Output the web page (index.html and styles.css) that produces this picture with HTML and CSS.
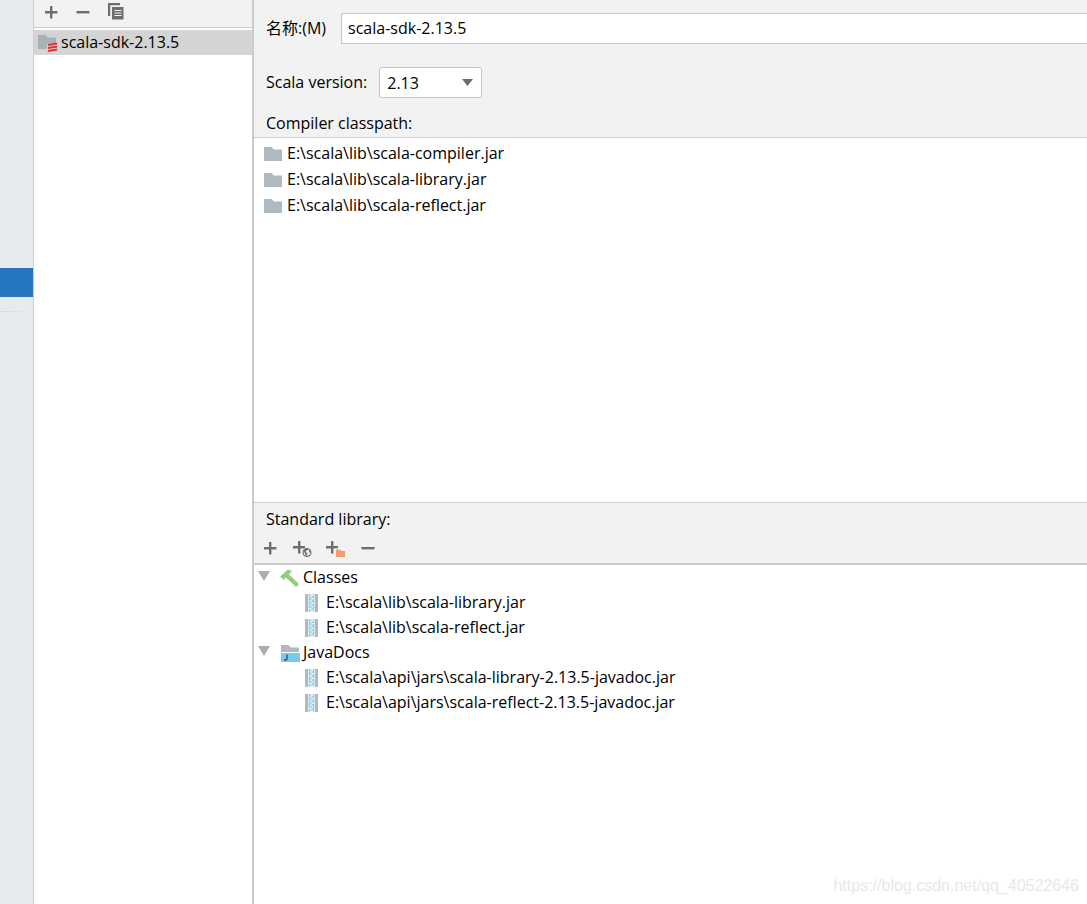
FILE: index.html
```html
<!DOCTYPE html>
<html lang="zh-CN">
<head>
<meta charset="utf-8">
<title>scala-sdk-2.13.5</title>
<link rel="stylesheet" href="styles.css">
</head>
<body>
<svg class="defs" aria-hidden="true">
  <symbol id="plus" viewBox="0 0 16 16"><path fill="#6e6e6e" d="M7 2h2.400v5h5v2.400h-5v5H7v-5H2V7h5z"/></symbol>
  <symbol id="minus" viewBox="0 0 16 16"><path fill="#6e6e6e" d="M1.500 7h13v2.400h-13z"/></symbol>
  <symbol id="folder" viewBox="0 0 18 14"><path fill="#aeb9c0" d="M0 0h7.500l2.300 2.500H18V14H0z"/></symbol>
  <symbol id="jar" viewBox="0 0 14 18">
    <path fill="#aeb9c0" d="M1 0h3.500v18H1zM10.500 0H14v18h-3.500z"/>
    <path fill="#e8f8fd" d="M4.500 0h6v18h-6z"/>
    <path fill="none" stroke="#62c4e3" stroke-dasharray="1.500 1" d="M5.500 0v18M9.500 0v18"/>
    <path fill="none" stroke="#8ad4ec" d="M5 1l5 2-5 2 5 2-5 2 5 2-5 2 5 2-5 2"/>
  </symbol>
</svg>
<div class="window">
  <nav class="rail" aria-label="Sections">
    <div class="rail-selected"></div>
    <div class="rail-separator"></div>
  </nav>
  <aside class="libraries">
    <div class="toolbar libraries-toolbar">
      <button type="button" aria-label="Add"><svg width="16" height="16"><use href="#plus"/></svg></button>
      <button type="button" aria-label="Remove"><svg width="16" height="16"><use href="#minus"/></svg></button>
      <button type="button" aria-label="Copy"><svg width="18" height="18" viewBox="0 0 18 18">
        <path fill="#6e6e6e" d="M1 0h12v2.200H3.200V13H1z"/>
        <path fill="#6e6e6e" d="M5 4h11.500v12.500H5z"/>
        <path stroke="#f2f2f2" d="M7.500 7.500h7M7.500 10h7M7.500 12.500h7"/>
      </svg></button>
    </div>
    <ul class="library-list">
      <li class="library-selected">
        <svg width="20" height="18" viewBox="0 0 20 18">
          <path fill="#a6b1b8" d="M0 1h7.500l2.300 2.500H18V9l-9 1v5H0z"/>
          <path fill="none" stroke="#e02f37" stroke-width="2" d="M10 11l9-1.500M10 14l9-1.500M10 17l9-1.500"/>
        </svg>
        <span>scala-sdk-2.13.5</span>
      </li>
    </ul>
  </aside>
  <main class="details">
    <form class="settings">
      <div class="name-row">
        <label for="name">名称:(M)</label>
        <input id="name" type="text" value="scala-sdk-2.13.5">
      </div>
      <div class="version-row">
        <label for="version">Scala version:</label>
        <div class="combo">
          <select id="version"><option>2.13</option></select>
          <svg class="combo-arrow" width="11" height="7" viewBox="0 0 11 7"><path fill="#6e6e6e" d="M0 0h11L5.500 7z"/></svg>
        </div>
      </div>
      <h2>Compiler classpath:</h2>
    </form>
    <ul class="classpath">
      <li><svg width="18" height="14"><use href="#folder"/></svg><span>E:\scala\lib\scala-compiler.jar</span></li>
      <li><svg width="18" height="14"><use href="#folder"/></svg><span>E:\scala\lib\scala-library.jar</span></li>
      <li><svg width="18" height="14"><use href="#folder"/></svg><span>E:\scala\lib\scala-reflect.jar</span></li>
    </ul>
    <section class="standard">
      <h2>Standard library:</h2>
      <div class="toolbar standard-toolbar">
        <button type="button" aria-label="Add"><svg width="16" height="16"><use href="#plus"/></svg></button>
        <button type="button" aria-label="Add from URL"><svg width="20" height="20" viewBox="0 0 20 20">
          <path fill="#6e6e6e" d="M6 3h2.400v5H13v2.400H8.400v5H6v-5H1V8h5z"/>
          <circle cx="15" cy="14.500" r="5" fill="#f2f2f2"/>
          <circle cx="15" cy="14.500" r="3.900" fill="#f2f2f2" stroke="#6e6e6e" stroke-width="1.200"/>
          <path fill="#6e6e6e" d="M11.500 13l2-2.500 2.500.5-.5 1.500-2 .5.500 1.500 1.500.5-.5 2.500h-1l-1-2zM17 12l1.500 1v2.500L17 14z"/>
        </svg></button>
        <button type="button" aria-label="Add folder"><svg width="20" height="20" viewBox="0 0 20 20">
          <path fill="#6e6e6e" d="M5 3h2.400v5H12v2.400H7.400v5H5v-5H0V8h5z"/>
          <path fill="#f2f2f2" d="M9 10.500h10V20H9z"/>
          <path fill="#f49b73" d="M10 11.500h4l1.500 1.500H19v6h-9z"/>
        </svg></button>
        <button type="button" aria-label="Remove"><svg width="16" height="16"><use href="#minus"/></svg></button>
      </div>
    </section>
    <ul class="tree">
      <li>
        <div class="branch">
          <svg class="toggle" width="12" height="10" viewBox="0 0 12 10"><path fill="#adadad" d="M0 0h12L6 10z"/></svg>
          <svg width="20" height="18" viewBox="0 0 20 18"><path fill="#92cd80" d="M0 7.500L8 0.500l4 1.500-3 3.500L19 15 16 18 6 8.500 3.500 11z"/></svg>
          <span>Classes</span>
        </div>
        <ul class="leaves">
          <li><svg width="14" height="18"><use href="#jar"/></svg><span>E:\scala\lib\scala-library.jar</span></li>
          <li><svg width="14" height="18"><use href="#jar"/></svg><span>E:\scala\lib\scala-reflect.jar</span></li>
        </ul>
      </li>
      <li>
        <div class="branch">
          <svg class="toggle" width="12" height="10" viewBox="0 0 12 10"><path fill="#adadad" d="M0 0h12L6 10z"/></svg>
          <svg width="20" height="18" viewBox="0 0 20 18">
            <path fill="#aeb9c0" d="M1 1h7.500l2.300 2.500H19V8H1z"/>
            <path fill="#74cbea" d="M1 9h19v9H1z"/>
            <path fill="none" stroke="#3c4f59" stroke-width="1.400" d="M7 10.500v4q0 1.500-1.500 1.500H4"/>
          </svg>
          <span>JavaDocs</span>
        </div>
        <ul class="leaves">
          <li><svg width="14" height="18"><use href="#jar"/></svg><span>E:\scala\api\jars\scala-library-2.13.5-javadoc.jar</span></li>
          <li><svg width="14" height="18"><use href="#jar"/></svg><span>E:\scala\api\jars\scala-reflect-2.13.5-javadoc.jar</span></li>
        </ul>
      </li>
    </ul>
  </main>
</div>
<div class="watermark">https://blog.csdn.net/qq_40522646</div>
</body>
</html>
```

FILE: styles.css
```css
* { box-sizing: border-box; }

body {
  margin: 0;
  background: #f2f2f2;
  color: #000;
  font: 16px/24px "Open Sans", "Noto Sans CJK SC", sans-serif;
}

ul { margin: 0; padding: 0; list-style: none; }
h2 { margin: 0; font-size: 16px; font-weight: 400; line-height: 24px; }
svg { display: block; flex: none; }
li span, label { padding-bottom: 2px; }
.defs { position: absolute; width: 0; height: 0; }

.window { display: flex; min-height: 100vh; }

.rail {
  flex: none;
  width: 34px;
  padding-top: 268px;
  border-right: 1px solid #cdd0d3;
  background: #e6ebef;
}
.rail-selected { height: 29px; background: #2675bf; }
.rail-separator {
  height: 1px;
  margin-top: 14px;
  background: linear-gradient(to right, #d5d9dc, #e6ebef);
}

.libraries {
  flex: none;
  display: flex;
  flex-direction: column;
  width: 220px;
  border-right: 2px solid #cbcbcb;
}
.toolbar { display: flex; align-items: center; }
.toolbar button { padding: 0; border: 0; background: none; }
.libraries-toolbar {
  gap: 16px;
  height: 28px;
  padding: 0 9px 4px;
  border-bottom: 1px solid #cdcdcd;
}
.library-list { flex: 1; padding-top: 2px; background: #fff; }
.library-selected {
  display: flex;
  align-items: center;
  gap: 3px;
  height: 25px;
  padding-left: 4px;
  background: #d4d4d4;
}

.details { flex: 1; min-width: 0; display: flex; flex-direction: column; }
.settings { padding: 13px 0 2px 12px; }
.name-row, .version-row { display: flex; align-items: center; }
.name-row { gap: 15px; }
.name-row label { flex: none; }
.name-row input {
  flex: 1;
  min-width: 0;
  height: 31px;
  padding: 0 6px 2px;
  border: 1px solid #c6c6c6;
  border-right: 0;
  background: #fff;
  color: inherit;
  font: inherit;
}
.version-row { gap: 12px; margin: 23px 0 13px; }
.combo { display: grid; align-items: center; width: 103px; }
.combo select, .combo-arrow { grid-area: 1 / 1; }
.combo select {
  appearance: none;
  width: 100%;
  height: 31px;
  padding: 0 7px;
  border: 1px solid #c4c4c4;
  border-radius: 3px;
  background: #fff;
  color: inherit;
  font: inherit;
}
.combo-arrow { justify-self: end; margin-right: 9px; pointer-events: none; }

.classpath {
  flex: 364 1 0;
  padding: 3px 10px;
  border-top: 1px solid #cdcdcd;
  border-bottom: 1px solid #cdcdcd;
  background: #fff;
}
.classpath li { display: flex; align-items: center; gap: 5px; height: 26px; }

.standard { padding: 4px 0 0 8px; }
.standard h2 { padding-left: 4px; }
.standard-toolbar { gap: 14px; height: 32px; padding-top: 2px; }

.tree {
  flex: 344 1 0;
  padding-top: 1px;
  border-top: 2px solid #cbcbcb;
  background: #fff;
}
.branch { display: flex; align-items: center; height: 25px; padding-left: 4px; }
.toggle { margin: 0 10px 4px 0; }
.branch span { padding-left: 3px; }
.leaves li { display: flex; align-items: center; gap: 8px; height: 25px; padding-left: 50px; }

.watermark {
  position: absolute;
  right: 8px;
  bottom: 6px;
  color: #e8e8e8;
  font: 16px/24px "Liberation Sans", sans-serif;
}
```
